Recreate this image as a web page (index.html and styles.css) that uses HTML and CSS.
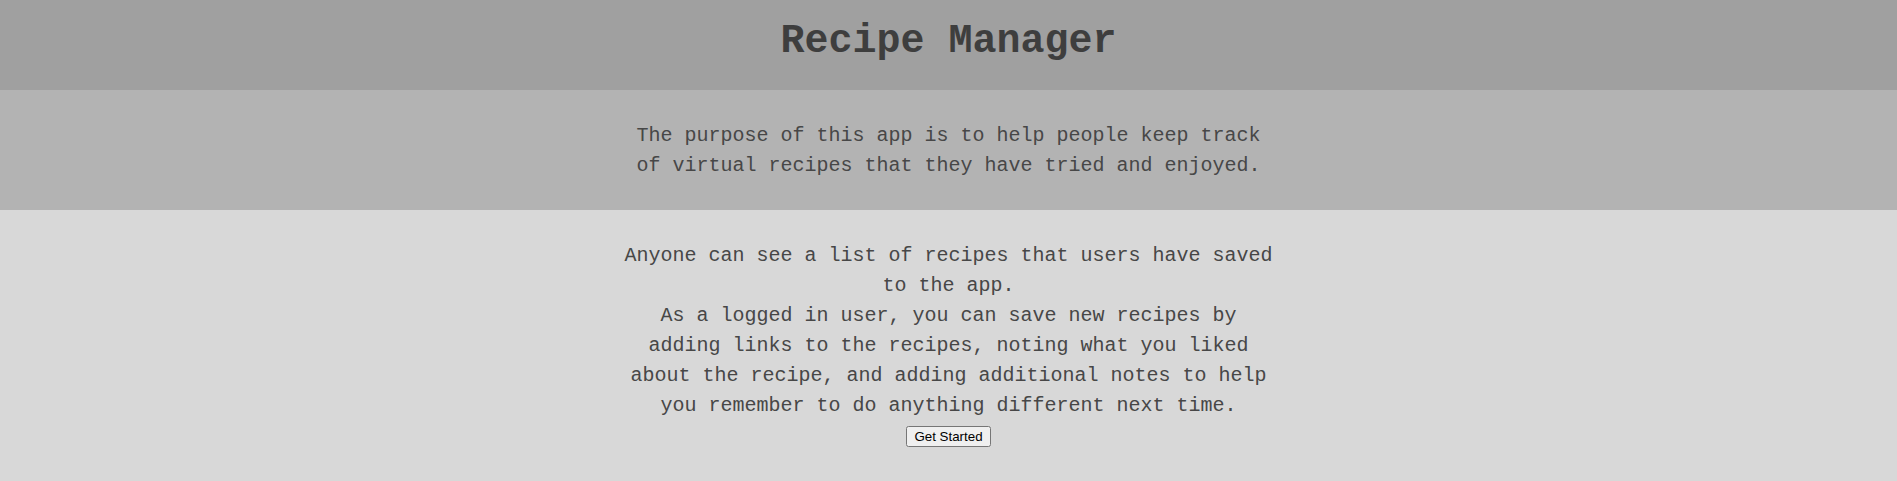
FILE: index.html
```html
<!DOCTYPE html>
<html lang="en">
<head>
<meta charset="utf-8">
<title>Recipe Manager</title>
<link rel="stylesheet" href="styles.css">
</head>
<body>
<header class="site-header">
  <h1 class="title">Recipe Manager</h1>
</header>
<section class="band band-purpose">
  <p class="text">The purpose of this app is to help people keep track of virtual recipes that they have tried and enjoyed.</p>
</section>
<section class="band band-info">
  <p class="text">Anyone can see a list of recipes that users have saved to the app.</p>
  <p class="text">As a logged in user, you can save new recipes by adding links to the recipes, noting what you liked about the recipe, and adding additional notes to help you remember to do anything different next time.</p>
  <button class="start-btn" type="button">Get Started</button>
</section>
</body>
</html>
```

FILE: styles.css
```css
html, body {
  margin: 0;
  padding: 0;
}
body {
  background: #d8d8d8;
  font-family: "Nimbus Mono PS", "Nimbus Mono L", "Liberation Mono", "Courier New", monospace;
  color: #444444;
}
.site-header {
  background: #a0a0a0;
  height: 90px;
  box-sizing: border-box;
  padding-top: 19px;
  text-align: center;
}
.title {
  margin: 0;
  font-family: "Nimbus Mono PS", "Nimbus Mono L", "Liberation Mono", "Courier New", monospace;
  font-weight: bold;
  font-size: 40px;
  line-height: normal;
  color: #3e3e3e;
}
.band {
  display: flex;
  flex-direction: column;
  align-items: center;
  text-align: center;
  padding: 31px 0 29px;
}
.band-purpose {
  background: #b3b3b3;
  height: 120px;
  box-sizing: border-box;
}
.band-info {
  background: #d8d8d8;
  min-height: 271px;
  box-sizing: border-box;
}
.text {
  margin: 0;
  max-width: 654px;
  font-size: 20px;
  line-height: 30px;
  color: #474747;
}
.start-btn {
  margin-top: 5px;
  font-family: "Liberation Sans", Arial, sans-serif;
  font-size: 13.333px;
}
```
